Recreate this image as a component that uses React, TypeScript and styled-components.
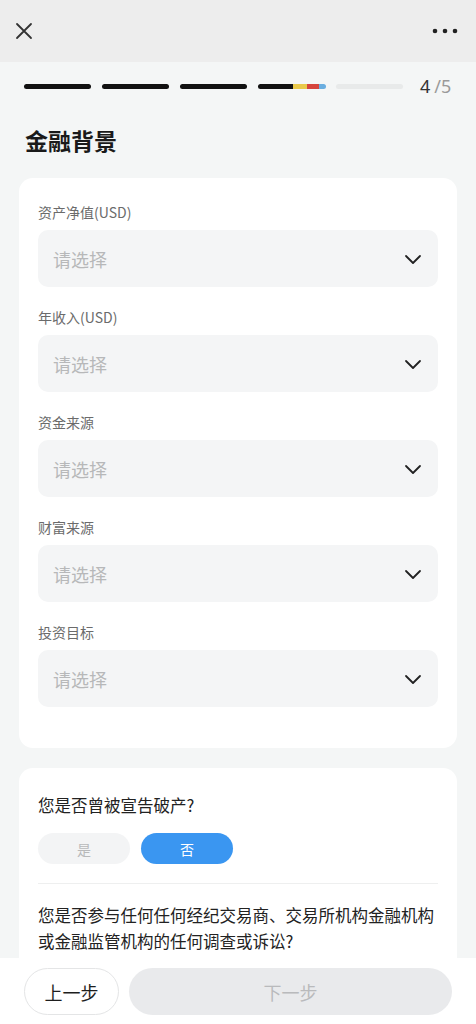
import React from 'react';
import styled, { createGlobalStyle } from 'styled-components';

const GlobalStyle = createGlobalStyle`
  html, body {
    margin: 0;
    padding: 0;
    background: #f4f6f6;
    font-family: "Noto Sans", "Noto Sans CJK SC", sans-serif;
    color: #222;
  }
  * {
    box-sizing: border-box;
  }
`;

const Page = styled.div`
  width: 476px;
  min-height: 1024px;
  background: #f4f6f6;
  padding-bottom: 80px;
`;

const Header = styled.div`
  height: 62px;
  background: #ededed;
  display: flex;
  align-items: center;
  justify-content: space-between;
  padding: 0 18px 0 14px;
`;

const IconButton = styled.div`
  display: flex;
  align-items: center;
  justify-content: center;
`;

const Main = styled.div`
  padding: 14px 19px 0 19px;
`;

const ProgressRow = styled.div`
  height: 20px;
  display: flex;
  align-items: center;
  padding-left: 5px;
`;

const Segment = styled.div<{ done?: boolean }>`
  width: 67px;
  height: 5px;
  border-radius: 3px;
  margin-right: 11px;
  background: ${({ done }) => (done ? '#111' : '#e8eaea')};
`;

const PartialSegment = styled.div`
  width: 68px;
  height: 5px;
  border-radius: 3px;
  margin-right: 10px;
  background: linear-gradient(
    to right,
    #111 0,
    #111 35px,
    #e9c94a 35px,
    #e9c94a 49px,
    #d6453d 49px,
    #d6453d 61px,
    #6aaee0 61px,
    #6aaee0 68px
  );
`;

const StepCount = styled.div`
  margin-left: 6px;
  font-size: 18px;
  color: #333;
  font-family: "Noto Sans", sans-serif;
  span {
    color: #9a9a9a;
    margin-left: 4px;
  }
`;

const Title = styled.h1`
  margin: 28px 0 0 6px;
  font-size: 23px;
  line-height: 32px;
  font-weight: 600;
  color: #1a1a1a;
  font-family: "Noto Sans CJK SC", sans-serif;
`;

const Card = styled.div<{ pb: number }>`
  margin-top: ${({ pb }) => (pb > 30 ? 22 : 20)}px;
  background: #fff;
  border-radius: 14px;
  padding: 24px 19px ${({ pb }) => pb}px 19px;
`;

const Field = styled.div`
  & + & {
    margin-top: 20px;
  }
`;

const Label = styled.div`
  font-size: 14px;
  line-height: 20px;
  color: #6b6b6b;
  font-family: "Noto Sans CJK SC", sans-serif;
`;

const Select = styled.div`
  margin-top: 8px;
  height: 57px;
  border-radius: 10px;
  background: #f4f5f6;
  display: flex;
  align-items: center;
  justify-content: space-between;
  padding: 0 16px 0 15px;
`;

const Placeholder = styled.span`
  font-size: 18px;
  color: #b7b8b9;
  font-family: "Noto Sans CJK SC", sans-serif;
`;

const Question = styled.div`
  font-size: 16.5px;
  line-height: 26px;
  color: #222;
  font-family: "Noto Sans CJK SC", sans-serif;
`;

const Options = styled.div`
  display: flex;
  gap: 11px;
  margin-top: 15px;
`;

const Option = styled.div<{ active?: boolean }>`
  width: 92px;
  height: 31px;
  border-radius: 16px;
  display: flex;
  align-items: center;
  justify-content: center;
  font-size: 14px;
  font-family: "Noto Sans CJK SC", sans-serif;
  background: ${({ active }) => (active ? '#3a96f1' : '#f3f4f5')};
  color: ${({ active }) => (active ? '#fff' : '#b8b9ba')};
`;

const Divider = styled.div`
  height: 1px;
  background: #eeefef;
  margin: 19px 0 18px;
`;

const BottomBar = styled.div`
  position: fixed;
  left: 0;
  bottom: 0;
  width: 476px;
  height: 66px;
  background: #fff;
  display: flex;
  align-items: flex-start;
  gap: 10px;
  padding: 10px 24px 0 24px;
`;

const BackButton = styled.div`
  width: 95px;
  height: 47px;
  border-radius: 24px;
  border: 1px solid #e4e5e6;
  background: #fff;
  display: flex;
  align-items: center;
  justify-content: center;
  font-size: 18px;
  color: #1e1e1e;
  font-family: "Noto Sans CJK SC", sans-serif;
`;

const NextButton = styled.div`
  flex: 1;
  height: 47px;
  border-radius: 24px;
  background: #e9eaec;
  display: flex;
  align-items: center;
  justify-content: center;
  font-size: 18px;
  color: #b9babc;
  font-family: "Noto Sans CJK SC", sans-serif;
`;

const Chevron = () => (
  <svg width="18" height="18" viewBox="0 0 18 18" fill="none">
    <path d="M2 6l7 7 7-7" stroke="#222" strokeWidth="1.8" strokeLinecap="round" strokeLinejoin="round" />
  </svg>
);

const fields = ['资产净值(USD)', '年收入(USD)', '资金来源', '财富来源', '投资目标'];

const App: React.FC = () => (
  <Page>
    <GlobalStyle />
    <Header>
      <IconButton>
        <svg width="20" height="20" viewBox="0 0 20 20" fill="none">
          <path d="M3 3l14 14M17 3L3 17" stroke="#333" strokeWidth="1.8" strokeLinecap="round" />
        </svg>
      </IconButton>
      <IconButton>
        <svg width="26" height="6" viewBox="0 0 26 6">
          <circle cx="3" cy="3" r="2.3" fill="#222" />
          <circle cx="13" cy="3" r="2.3" fill="#222" />
          <circle cx="23" cy="3" r="2.3" fill="#222" />
        </svg>
      </IconButton>
    </Header>
    <Main>
      <ProgressRow>
        <Segment done />
        <Segment done />
        <Segment done />
        <PartialSegment />
        <Segment />
        <StepCount>
          4<span>/5</span>
        </StepCount>
      </ProgressRow>
      <Title>金融背景</Title>
      <Card pb={41}>
        {fields.map((label) => (
          <Field key={label}>
            <Label>{label}</Label>
            <Select>
              <Placeholder>请选择</Placeholder>
              <Chevron />
            </Select>
          </Field>
        ))}
      </Card>
      <Card pb={24}>
        <Question>您是否曾被宣告破产?</Question>
        <Options>
          <Option>是</Option>
          <Option active>否</Option>
        </Options>
        <Divider />
        <Question>您是否参与任何任何经纪交易商、交易所机构金融机构或金融监管机构的任何调查或诉讼?</Question>
      </Card>
    </Main>
    <BottomBar>
      <BackButton>上一步</BackButton>
      <NextButton>下一步</NextButton>
    </BottomBar>
  </Page>
);

export default App;
